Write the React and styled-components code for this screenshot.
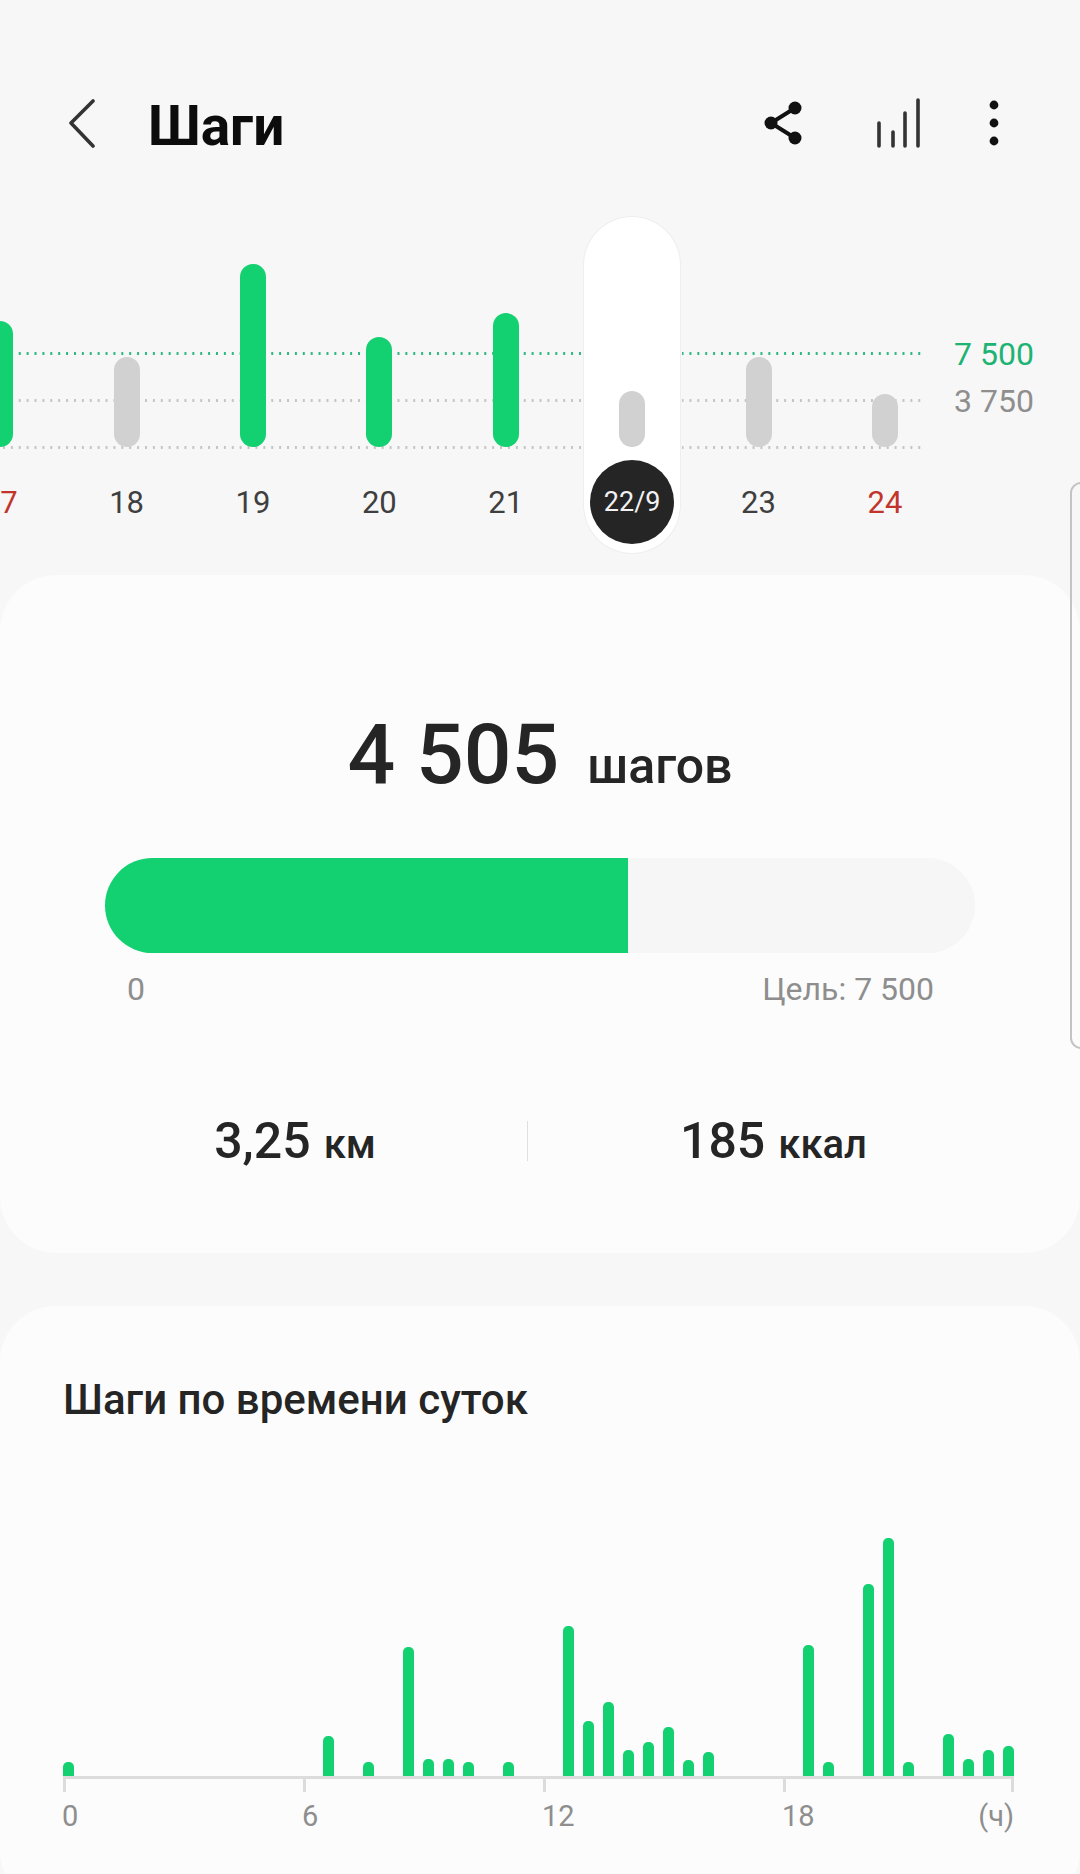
import styled, { createGlobalStyle } from "styled-components"

const GREEN = "#13d070"

const GlobalStyle = createGlobalStyle`
	html, body {
		margin: 0;
		padding: 0;
		background: #f7f7f7;
	}
	body {
		font-family: Roboto, "Noto Sans", sans-serif;
	}
`

const Page = styled.div`
	position: relative;
	width: 1080px;
	height: 1874px;
	overflow: hidden;
	background: #f7f7f7;
	color: #252525;
`

const Header = styled.header`
	display: flex;
	align-items: center;
	height: 70px;
	margin-top: 88px;
	padding: 0 0 0 66px;
`

const Title = styled.h1`
	flex: 1;
	margin: 6px 0 0 52px;
	font-size: 55px;
	font-weight: 700;
	line-height: 70px;
	color: #0c0c0c;
`

const HeaderIcon = styled.svg`
	display: block;
	flex: none;
	margin-right: ${(p) => p.$gap || 0}px;
`

const Chart = styled.section`
	position: relative;
	padding-top: 59px;
	margin-bottom: 22px;
`

const Guide = styled.div`
	position: absolute;
	left: 0;
	top: ${(p) => p.$top}px;
	display: flex;
	align-items: center;
	height: 36px;
`

const GuideDots = styled.div`
	width: 923px;
	height: 3px;
	background-image: radial-gradient(circle, ${(p) => p.$color} 1.1px, transparent 1.5px);
	background-size: 7.9px 3px;
`

const GuideValue = styled.span`
	margin: 1px 0 0 31px;
	font-size: 32px;
	line-height: 36px;
	color: ${(p) => p.$color};
`

const Days = styled.div`
	position: relative;
	z-index: 1;
	display: flex;
	margin-left: -63px;
`

const Day = styled.div`
	flex: none;
	width: 126.4px;
	display: flex;
	justify-content: center;
`

const DaySlot = styled.div`
	display: flex;
	flex-direction: column;
	align-items: center;
	justify-content: flex-end;
	width: 96px;
	height: 336px;
	box-sizing: border-box;
	padding-bottom: 9px;
	border-radius: 48px;
	${(p) => p.$active && `
		background: #fff;
		box-shadow: 0 0 0 1px #eeeeee, 0 0 0 2px #f7f7f7;
	`}
`

const DayBar = styled.div`
	width: 26px;
	margin-bottom: 13px;
	border-radius: 13px;
	background: ${(p) => (p.$met ? GREEN : "#d1d1d1")};
`

const DayLabel = styled.div`
	display: flex;
	align-items: center;
	justify-content: center;
	width: 84px;
	height: 84px;
	border-radius: 50%;
	font-size: ${(p) => (p.$active ? 27 : 31)}px;
	color: ${(p) => (p.$active ? "#f2f2f2" : p.$weekend ? "#c2352c" : "#3f3f3f")};
	background: ${(p) => (p.$active ? "#252525" : "transparent")};
`

const Card = styled.section`
	box-sizing: border-box;
	background: #fcfcfc;
	border-radius: 56px;
`

const SummaryCard = styled(Card)`
	height: 678px;
	margin-bottom: 53px;
	padding-top: 132px;
`

const Total = styled.div`
	display: flex;
	justify-content: center;
	align-items: baseline;
	gap: 28px;
	height: 96px;
	line-height: 96px;
`

const TotalValue = styled.span`
	font-size: 84px;
	font-weight: 500;
`

const TotalUnit = styled.span`
	font-size: 50px;
	font-weight: 500;
`

const Progress = styled.div`
	width: 870px;
	height: 95px;
	margin: 55px 0 0 105px;
	border-radius: 48px;
	overflow: hidden;
	background: #f6f6f6;
`

const ProgressFill = styled.div`
	height: 100%;
	background: ${GREEN};
`

const ProgressLabels = styled.div`
	display: flex;
	justify-content: space-between;
	margin: 18px 146px 0 127px;
	font-size: 32px;
	line-height: 36px;
	color: #8e8e8e;
`

const Stats = styled.div`
	display: grid;
	grid-template-columns: 464px 1px 1fr;
	align-items: center;
	margin: 104px 61px 0 63px;
`

const Stat = styled.div`
	display: flex;
	justify-content: center;
	align-items: baseline;
	gap: 13px;
	line-height: 60px;
`

const StatValue = styled.span`
	font-size: 50px;
	font-weight: 500;
`

const StatUnit = styled.span`
	font-size: 40px;
	font-weight: 500;
`

const StatDivider = styled.div`
	height: 40px;
	margin-bottom: 5px;
	background: #e0e0e0;
`

const HourlyCard = styled(Card)`
	height: 601px;
	padding-top: 70px;
`

const CardTitle = styled.h2`
	margin: 0 0 0 63px;
	font-size: 42px;
	font-weight: 500;
	line-height: 48px;
`

const HourBars = styled.div`
	display: grid;
	grid-template-columns: repeat(48, 20px);
	align-items: end;
	height: 240px;
	margin: 112px 0 0 63px;
`

const HourBar = styled.div`
	width: 10.5px;
	border-radius: 5px 5px 0 0;
	background: ${GREEN};
`

const HourAxis = styled.div`
	display: grid;
	grid-template-columns: 240px 240px 240px 231px;
	width: 951px;
	margin-left: 63px;
	border-top: 3px solid #dcdcdc;
	box-sizing: border-box;
`

const AxisCell = styled.div`
	display: flex;
	justify-content: space-between;
	height: 60px;
	font-size: 29px;
	color: #8e8e8e;
`

const AxisMark = styled.div`
	display: flex;
	flex-direction: column;
	align-items: ${(p) => (p.$end ? "flex-end" : "flex-start")};
`

const AxisTick = styled.div`
	width: 3px;
	height: 13px;
	background: #dcdcdc;
`

const AxisText = styled.div`
	margin: 7px 0 0 -1px;
	line-height: 34px;
`

const EdgeHandle = styled.div`
	position: absolute;
	top: 482px;
	right: -12px;
	width: 18px;
	height: 563px;
	border: 2px solid #c4c4c4;
	border-radius: 14px;
`

const DAYS = [
	{ label: "17", height: 126, met: true, weekend: true },
	{ label: "18", height: 90 },
	{ label: "19", height: 183, met: true },
	{ label: "20", height: 110, met: true },
	{ label: "21", height: 134, met: true },
	{ label: "22/9", height: 56, active: true },
	{ label: "23", height: 90 },
	{ label: "24", height: 53, weekend: true },
]

// slot number (half hours) -> bar height
const HOURS = {
	0: 14, 13: 40, 15: 14, 17: 129, 18: 17, 19: 17, 20: 14, 22: 14,
	25: 150, 26: 55, 27: 74, 28: 26, 29: 34, 30: 49, 31: 16, 32: 24,
	37: 131, 38: 14, 40: 192, 41: 238, 42: 14, 44: 42, 45: 17, 46: 26, 47: 30,
}

const AXIS = ["0", "6", "12"]

function App() {
	return (
		<Page>
			<GlobalStyle />
			<Header>
				<HeaderIcon width="30" height="50" viewBox="0 0 30 50" fill="none" stroke="#333" strokeWidth="3.6" strokeLinecap="round" strokeLinejoin="round">
					<path d="M27 3 L5 25 L27 48" />
				</HeaderIcon>
				<Title>Шаги</Title>
				<HeaderIcon $gap={72} width="42" height="46" viewBox="0 0 42 46">
					<g stroke="#111" strokeWidth="4" fill="none">
						<path d="M33 8 L9 23 L33 38" />
					</g>
					<g fill="#111">
						<circle cx="33" cy="8" r="6.5" />
						<circle cx="9" cy="23" r="6.5" />
						<circle cx="33" cy="38" r="6.5" />
					</g>
				</HeaderIcon>
				<HeaderIcon $gap={68} width="44" height="50" viewBox="0 0 44 50" fill="none" stroke="#333" strokeWidth="3.6" strokeLinecap="round">
					<path d="M3 25 V48 M17 34 V48 M29 15 V48 M42 2 V48" />
				</HeaderIcon>
				<HeaderIcon $gap={80} width="12" height="50" viewBox="0 0 12 50" fill="#111">
					<circle cx="6" cy="7" r="4.4" />
					<circle cx="6" cy="25" r="4.4" />
					<circle cx="6" cy="43" r="4.4" />
				</HeaderIcon>
			</Header>

			<Chart>
				<Guide $top={177}>
					<GuideDots $color="#2cb67f" />
					<GuideValue $color="#1cb373">7 500</GuideValue>
				</Guide>
				<Guide $top={224}>
					<GuideDots $color="#c4c4c4" />
					<GuideValue $color="#8e8e8e">3 750</GuideValue>
				</Guide>
				<Guide $top={271}>
					<GuideDots $color="#c4c4c4" />
				</Guide>
				<Days>
					{DAYS.map((day) => (
						<Day key={day.label}>
							<DaySlot $active={day.active}>
								<DayBar $met={day.met} style={{ height: day.height }} />
								<DayLabel $active={day.active} $weekend={day.weekend}>
									{day.label}
								</DayLabel>
							</DaySlot>
						</Day>
					))}
				</Days>
			</Chart>

			<SummaryCard>
				<Total>
					<TotalValue>4 505</TotalValue>
					<TotalUnit>шагов</TotalUnit>
				</Total>
				<Progress>
					<ProgressFill style={{ width: `${(523 / 870) * 100}%` }} />
				</Progress>
				<ProgressLabels>
					<span>0</span>
					<span>Цель: 7 500</span>
				</ProgressLabels>
				<Stats>
					<Stat>
						<StatValue>3,25</StatValue>
						<StatUnit>км</StatUnit>
					</Stat>
					<StatDivider />
					<Stat>
						<StatValue>185</StatValue>
						<StatUnit>ккал</StatUnit>
					</Stat>
				</Stats>
			</SummaryCard>

			<HourlyCard>
				<CardTitle>Шаги по времени суток</CardTitle>
				<HourBars>
					{Array.from({ length: 48 }, (_, slot) => (
						<div key={slot}>
							{HOURS[slot] && <HourBar style={{ height: HOURS[slot] }} />}
						</div>
					))}
				</HourBars>
				<HourAxis>
					{AXIS.map((text) => (
						<AxisCell key={text}>
							<AxisMark>
								<AxisTick />
								<AxisText>{text}</AxisText>
							</AxisMark>
						</AxisCell>
					))}
					<AxisCell>
						<AxisMark>
							<AxisTick />
							<AxisText>18</AxisText>
						</AxisMark>
						<AxisMark $end>
							<AxisTick />
							<AxisText>(ч)</AxisText>
						</AxisMark>
					</AxisCell>
				</HourAxis>
			</HourlyCard>

			<EdgeHandle />
		</Page>
	)
}

export default App
